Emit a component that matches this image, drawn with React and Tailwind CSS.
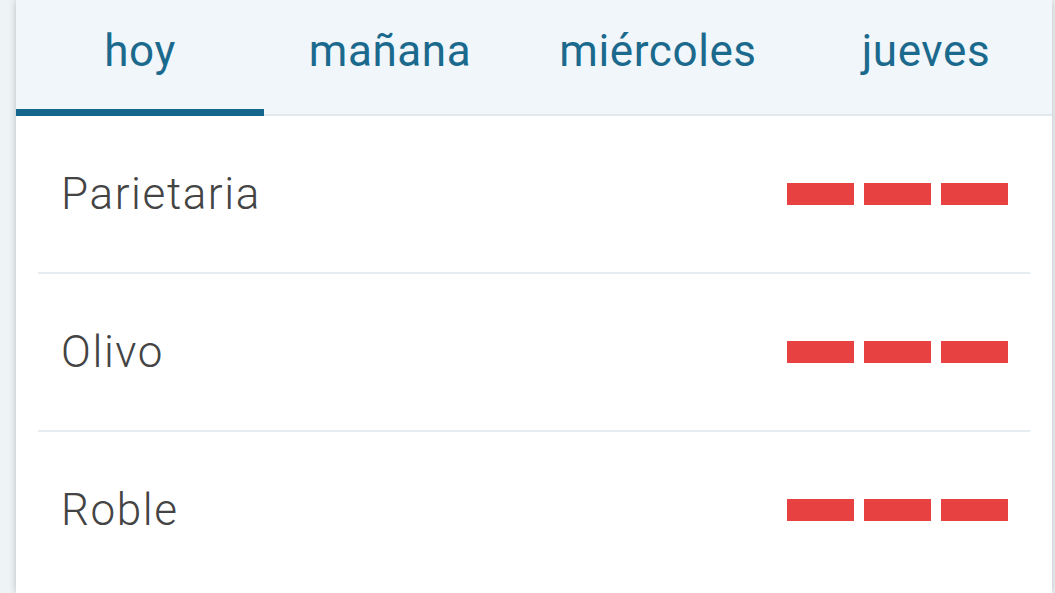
import React from "react";

const tabs = [
  { label: "hoy", w: "w-[248px]", active: true },
  { label: "mañana", w: "w-[252px]" },
  { label: "miércoles", w: "w-[284px]" },
  { label: "jueves", w: "w-[252px]" },
];

const rows = ["Parietaria", "Olivo", "Roble"];

function Bars() {
  return (
    <div className="flex gap-[10px]">
      <div className="w-[67px] h-[22px] bg-[#e84141]" />
      <div className="w-[67px] h-[22px] bg-[#e84141]" />
      <div className="w-[67px] h-[22px] bg-[#e84141]" />
    </div>
  );
}

export default function App() {
  return (
    <div className="h-[593px] w-[1055px] overflow-hidden bg-[#eef3f6] font-['Roboto',sans-serif]">
      <div className="ml-[16px] w-[1036px] h-full bg-white shadow-[0_0_7px_rgba(0,0,0,0.22)]">
        <div className="flex h-[116px] bg-[#f0f6fa] shadow-[inset_0_-2px_0_#e2e9ee]">
          {tabs.map((t) => (
            <div key={t.label} className={`relative ${t.w} h-full`}>
              <div className="h-[102px] flex items-center justify-center text-[44px] font-normal text-[#1b6a8d] tracking-[0.6px]">
                {t.label}
              </div>
              {t.active && (
                <div className="absolute left-0 right-0 bottom-0 h-[7px] bg-[#15668c]" />
              )}
            </div>
          ))}
        </div>
        {rows.map((r, i) => (
          <div key={r}>
            <div className="h-[156px] flex items-center justify-between pl-[45px] pr-[44px]">
              <span className="text-[44px] font-light text-[#444444] tracking-[1.6px]">{r}</span>
              <Bars />
            </div>
            {i < rows.length - 1 && <div className="mx-[22px] h-[2px] bg-[#e6edf1]" />}
          </div>
        ))}
      </div>
    </div>
  );
}
